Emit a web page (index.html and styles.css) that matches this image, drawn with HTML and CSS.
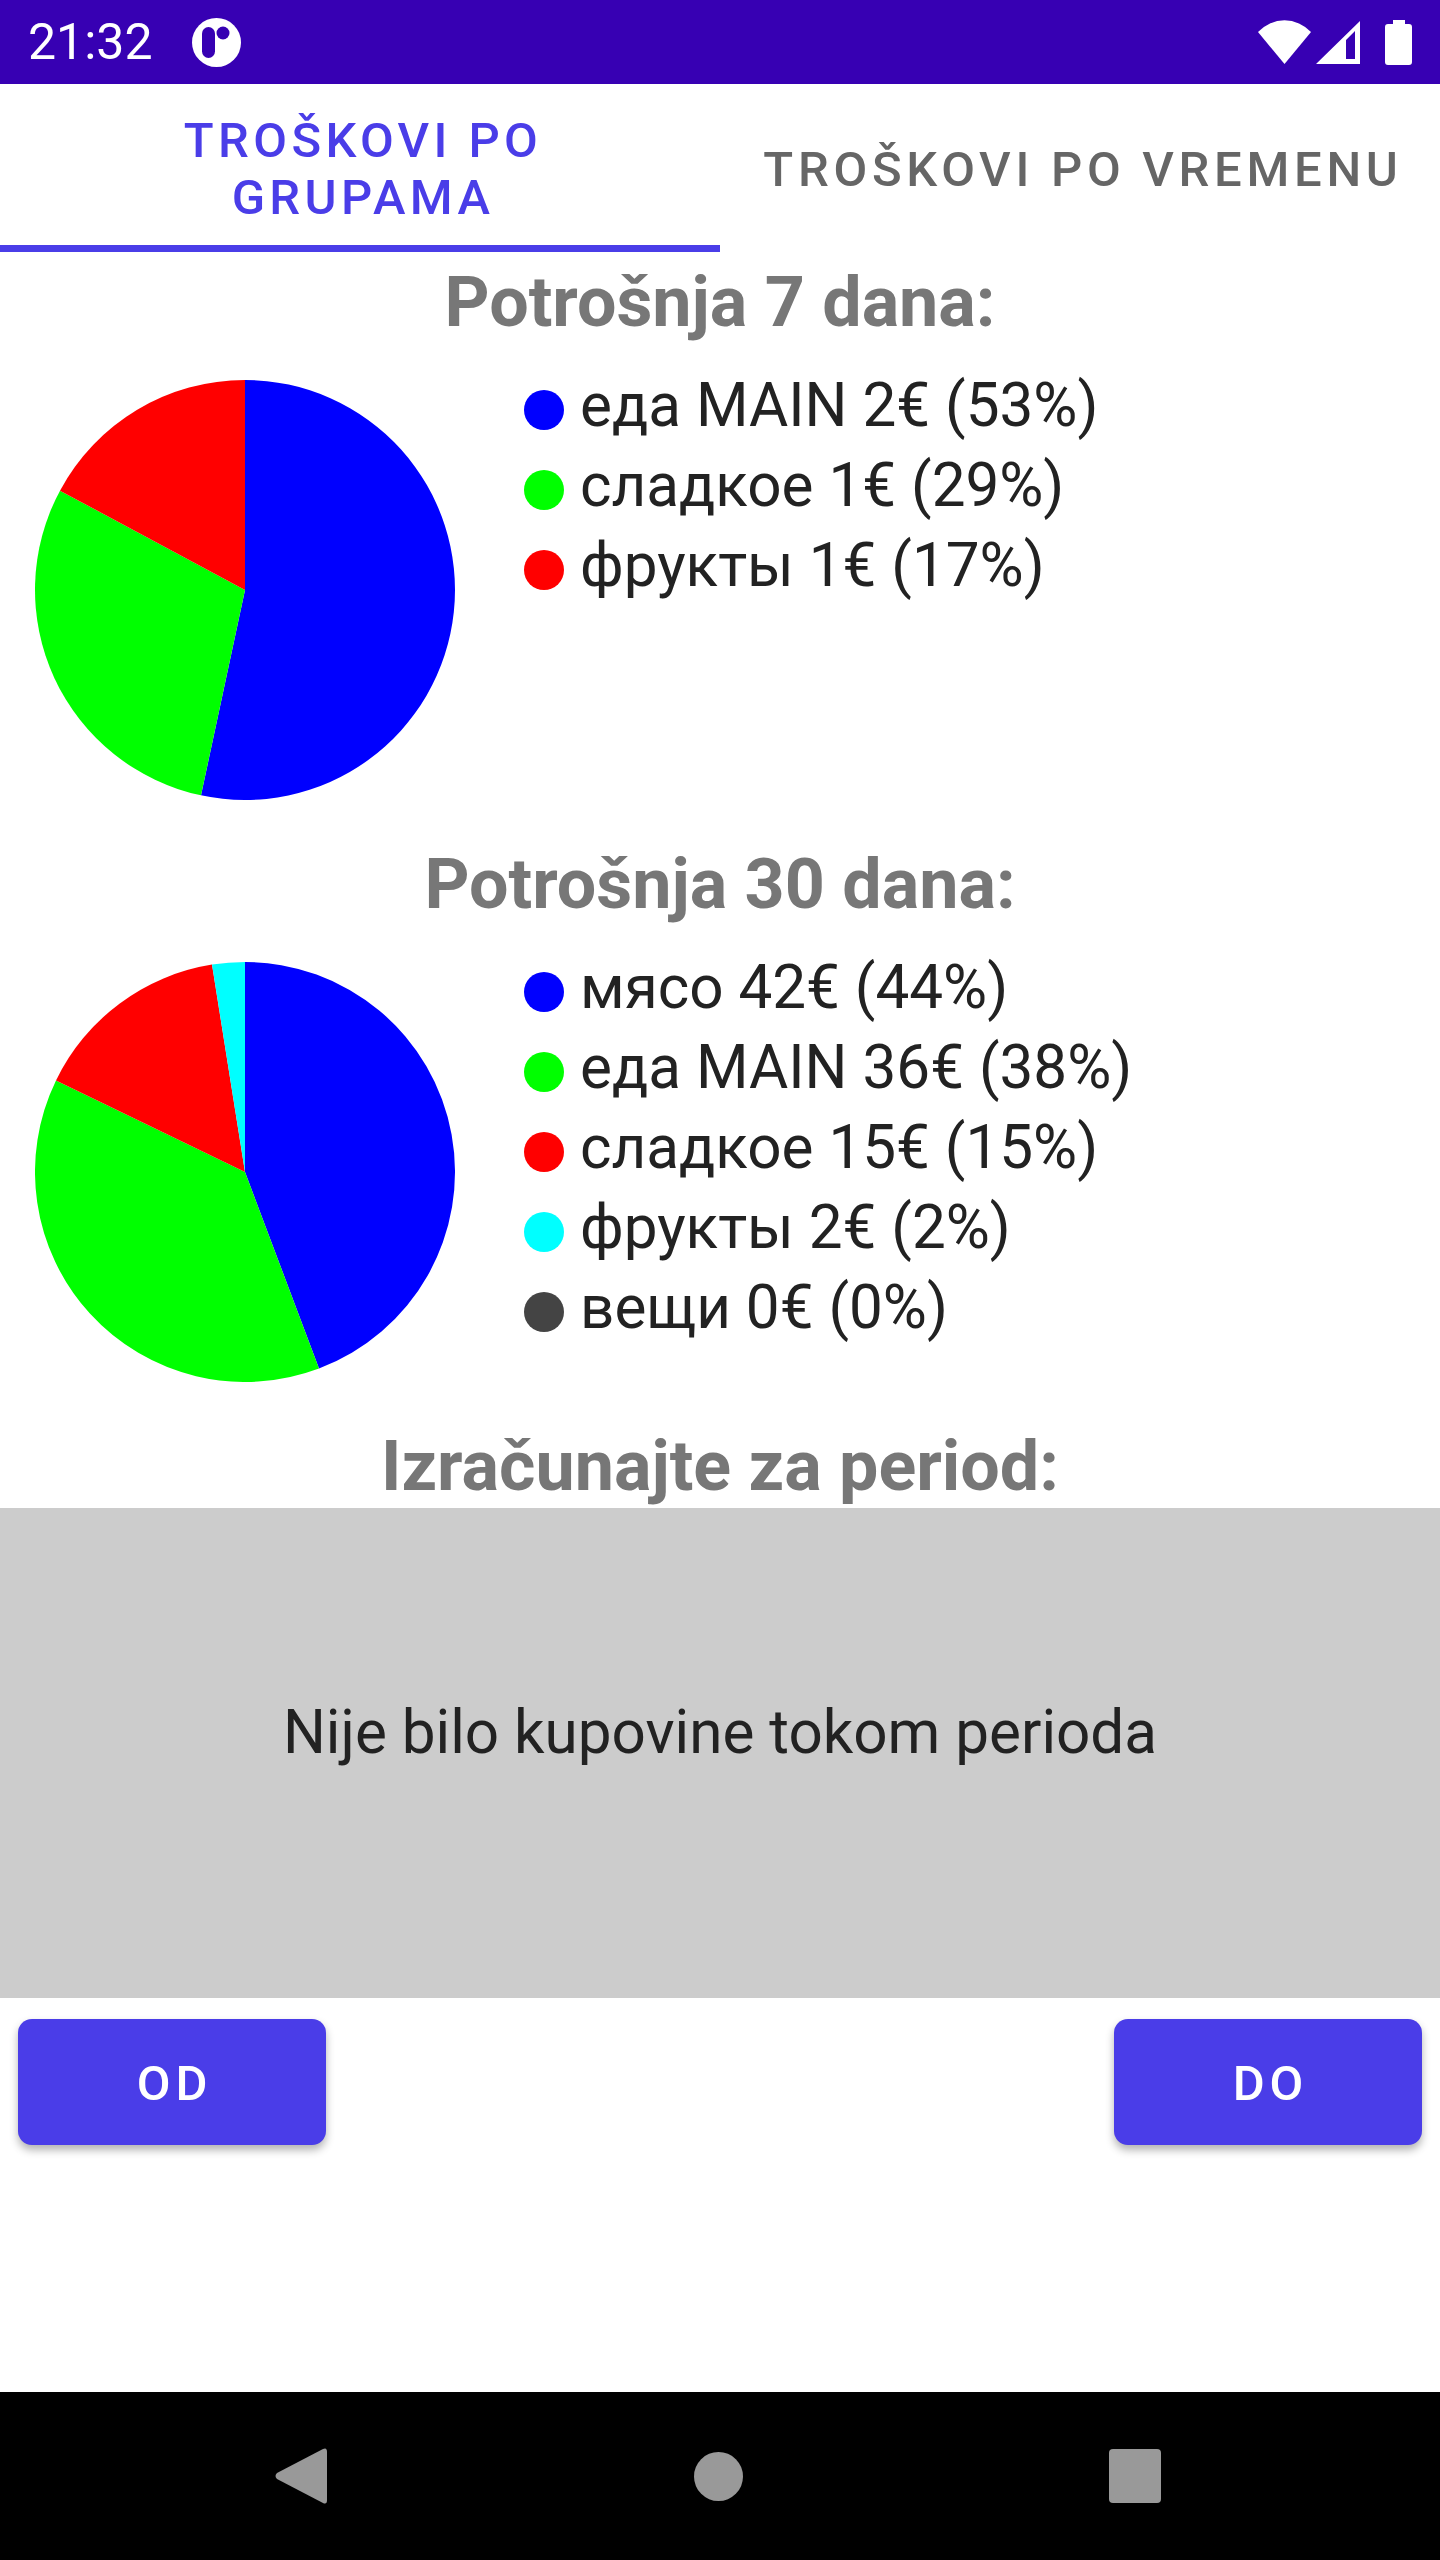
FILE: index.html
```html
<!DOCTYPE html>
<html lang="en">
<head>
    <meta charset="UTF-8">
    <title>Troškovi</title>
    <link rel="stylesheet" href="styles.css">
</head>
<body>
    <div class="screen">
        <div class="status-bar">
            <span class="clock">21:32</span>
            <svg class="app-icon" width="49" height="49" viewBox="0 0 49 49">
                <circle cx="24.500" cy="24.500" r="24.500" fill="#fff"/>
                <rect x="10" y="9" width="13" height="31" rx="6.500" fill="#3700b3"/>
                <circle cx="31" cy="15" r="6.500" fill="#3700b3"/>
            </svg>
            <div class="status-icons">
                <svg class="wifi" width="53" height="44" viewBox="0 0 53 44">
                    <path d="M0 12 A36 36 0 0 1 53 12 L26.500 44 Z" fill="#fff"/>
                </svg>
                <svg class="signal" width="44" height="44" viewBox="0 0 44 44">
                    <path fill-rule="evenodd" d="M0 44 L44 1 V44 Z M30 39 H39 V11 L30 20 Z" fill="#fff"/>
                </svg>
                <svg class="battery" width="27" height="45" viewBox="0 0 27 45">
                    <path d="M8 0 H20 V4 H24 Q27 4 27 7 V42 Q27 45 24 45 H3 Q0 45 0 42 V7 Q0 4 3 4 H8 Z" fill="#fff"/>
                </svg>
            </div>
        </div>

        <div class="tabs">
            <div class="tab tab-active">TROŠKOVI PO<br>GRUPAMA</div>
            <div class="tab">TROŠKOVI PO VREMENU</div>
        </div>

        <h2 class="title">Potrošnja 7 dana:</h2>
        <div class="chart-row">
            <svg class="pie" width="420" height="420" viewBox="-210 -210 420 420">
                <path d="M0 0 L0 -210 A210 210 0 1 1 -44 205.340 Z" fill="#00f"/>
                <path d="M0 0 L-44 205.340 A210 210 0 0 1 -185 -99.370 Z" fill="#0f0"/>
                <path d="M0 0 L-185 -99.370 A210 210 0 0 1 0 -210 Z" fill="#f00"/>
            </svg>
            <ul class="legend">
                <li><span class="dot dot-blue"></span>еда MAIN 2€ (53%)</li>
                <li><span class="dot dot-green"></span>сладкое 1€ (29%)</li>
                <li><span class="dot dot-red"></span>фрукты 1€ (17%)</li>
            </ul>
        </div>

        <h2 class="title">Potrošnja 30 dana:</h2>
        <div class="chart-row">
            <svg class="pie" width="420" height="420" viewBox="-210 -210 420 420">
                <path d="M0 0 L0 -210 A210 210 0 0 1 74 196.530 Z" fill="#00f"/>
                <path d="M0 0 L74 196.530 A210 210 0 0 1 -189 -91.540 Z" fill="#0f0"/>
                <path d="M0 0 L-189 -91.540 A210 210 0 0 1 -33 -207.390 Z" fill="#f00"/>
                <path d="M0 0 L-33 -207.390 A210 210 0 0 1 0 -210 Z" fill="#0ff"/>
            </svg>
            <ul class="legend">
                <li><span class="dot dot-blue"></span>мясо 42€ (44%)</li>
                <li><span class="dot dot-green"></span>еда MAIN 36€ (38%)</li>
                <li><span class="dot dot-red"></span>сладкое 15€ (15%)</li>
                <li><span class="dot dot-cyan"></span>фрукты 2€ (2%)</li>
                <li><span class="dot dot-dark"></span>вещи 0€ (0%)</li>
            </ul>
        </div>

        <h2 class="title">Izračunajte za period:</h2>
        <div class="period-box">Nije bilo kupovine tokom perioda</div>
        <div class="buttons">
            <button class="btn">OD</button>
            <button class="btn">DO</button>
        </div>

        <div class="nav-bar">
            <svg width="52" height="56" viewBox="0 0 52 56">
                <path d="M48 1 Q52 -1 52 4 V52 Q52 57 48 55 L2 31 Q-1 28 2 25 Z" fill="#999"/>
            </svg>
            <svg width="49" height="49" viewBox="0 0 49 49">
                <circle cx="24.500" cy="24.500" r="24.500" fill="#999"/>
            </svg>
            <svg width="52" height="54" viewBox="0 0 52 54">
                <rect width="52" height="54" rx="4" fill="#999"/>
            </svg>
        </div>
    </div>
</body>
</html>
```

FILE: styles.css
```css
*{
    box-sizing: border-box;
}
body{
    margin: 0;
    font-family: Roboto, sans-serif;
    background: #fff;
}
.screen{
    width: 1440px;
    height: 2560px;
    display: flex;
    flex-direction: column;
}
.status-bar{
    height: 84px;
    background: #3700b3;
    display: flex;
    align-items: center;
    padding: 0 28px;
    color: #fff;
}
.clock{
    width: 164px;
    font-size: 50px;
}
.app-icon{
    display: block;
}
.status-icons{
    margin-left: auto;
    display: flex;
    align-items: center;
}
.wifi{
    margin-right: 5px;
}
.signal{
    margin-right: 25px;
}
.tabs{
    display: flex;
    height: 168px;
}
.tab{
    width: 720px;
    display: flex;
    align-items: center;
    justify-content: center;
    text-align: center;
    white-space: nowrap;
    font-size: 49px;
    font-weight: 500;
    letter-spacing: 4.370px;
    line-height: 57px;
    color: #666;
    padding: 9px 0 7px 6px;
}
.tab + .tab{
    letter-spacing: 4.700px;
}
.tab-active{
    color: #4a3de8;
    border-bottom: 7px solid #4a3de8;
    padding-bottom: 0;
}
.title{
    margin: 0;
    height: 92px;
    padding-top: 8px;
    font-size: 70px;
    line-height: 84px;
    font-weight: 700;
    color: #777;
    text-align: center;
}
.chart-row{
    display: flex;
    height: 490px;
    padding: 21px 0 0 35px;
}
.pie{
    display: block;
    margin-top: 15px;
}
.legend{
    list-style: none;
    margin: 0 0 0 69px;
    padding: 0;
    font-size: 60.200px;
    color: #222;
}
.legend li{
    display: flex;
    align-items: center;
    height: 80px;
}
.dot{
    width: 40px;
    height: 40px;
    border-radius: 50%;
    margin: 10px 16px 0 0;
}
.dot-blue{ background: #00f; }
.dot-green{ background: #0f0; }
.dot-red{ background: #f00; }
.dot-cyan{ background: #0ff; }
.dot-dark{ background: #444; }
.period-box{
    height: 490px;
    background: #ccc;
    display: flex;
    align-items: center;
    justify-content: center;
    padding-bottom: 42px;
    font-size: 60.200px;
    color: #222;
}
.buttons{
    display: flex;
    justify-content: space-between;
    padding: 21px 18px 0;
    flex: 1;
}
.btn{
    width: 308px;
    height: 126px;
    border: none;
    border-radius: 14px;
    padding: 2px 0 0 5px;
    background: #4a3de8;
    color: #fff;
    font-family: Roboto, sans-serif;
    font-size: 49px;
    font-weight: 500;
    letter-spacing: 5px;
    box-shadow: 0 5px 9px rgba(0,0,0,.3);
}
.nav-bar{
    height: 168px;
    background: #000;
    display: flex;
    align-items: center;
    padding: 0 279px 0 275px;
    justify-content: space-between;
}
```
